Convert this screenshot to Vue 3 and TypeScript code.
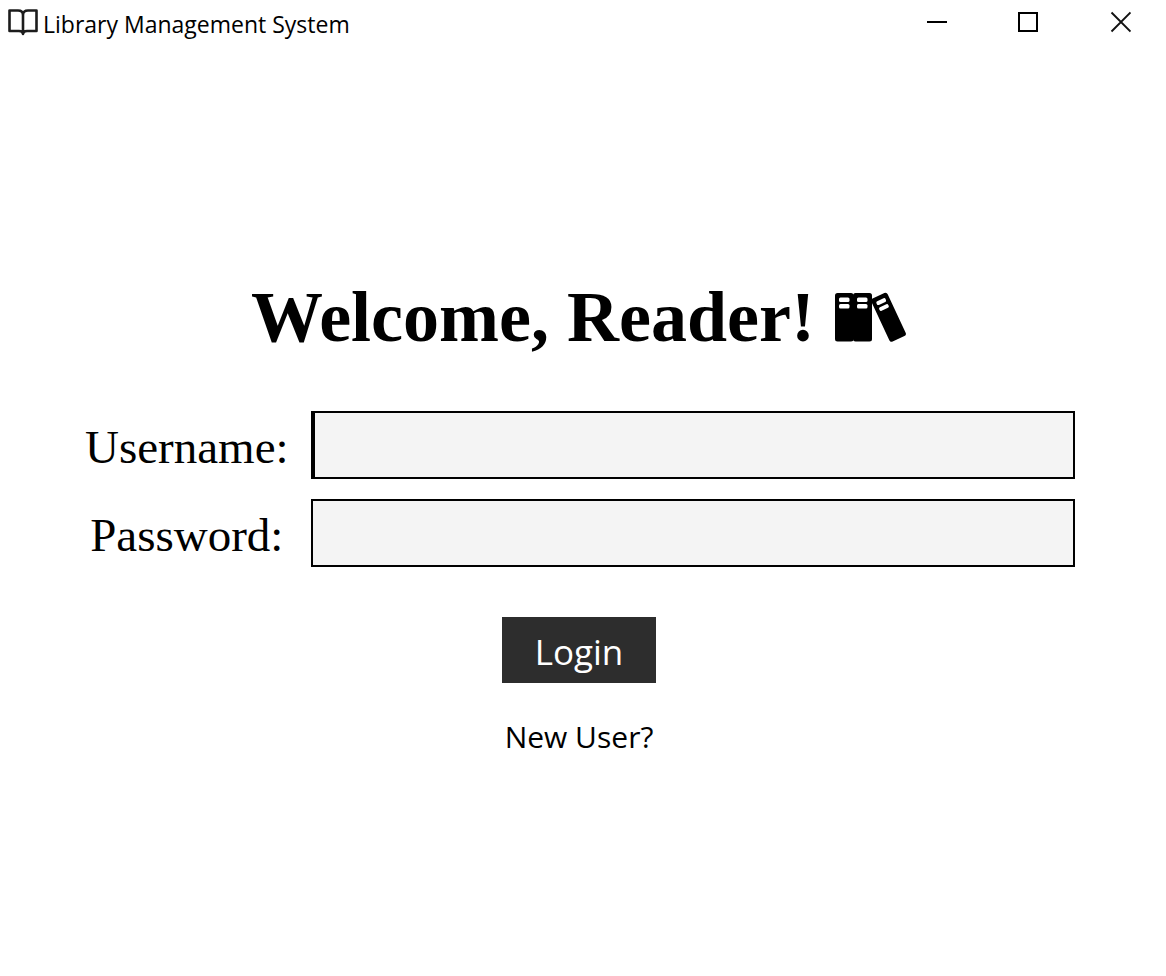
<script setup lang="ts">
import { onMounted, ref } from 'vue'

const username = ref('')
const password = ref('')
const usernameField = ref<HTMLInputElement | null>(null)

onMounted(() => usernameField.value?.focus())
</script>

<template>
  <div class="window">
    <header class="titlebar">
      <svg class="app-icon" viewBox="0 0 32 28" aria-hidden="true">
        <path
          d="M2.500 2.500H11Q16 2.500 16 7Q16 2.500 21 2.500H29.500V23H20Q16 23 16 26Q16 23 12 23H2.500ZM16 6V26"
          fill="none"
          stroke="#1c1c1c"
          stroke-width="2.6"
          stroke-linejoin="round"
        />
      </svg>
      <span class="app-title">Library Management System</span>
      <div class="controls">
        <button type="button" aria-label="Minimize">
          <svg viewBox="0 0 22 22"><path d="M2 11H22" stroke="#000" stroke-width="2" /></svg>
        </button>
        <button type="button" aria-label="Maximize">
          <svg viewBox="0 0 22 22"><rect x="2" y="2" width="18" height="18" fill="none" stroke="#000" stroke-width="2" /></svg>
        </button>
        <button type="button" aria-label="Close">
          <svg viewBox="0 0 22 22"><path d="M2.500 1.500L21.500 20.500M21.500 1.500L2.500 20.500" stroke="#111" stroke-width="1.9" /></svg>
        </button>
      </div>
    </header>

    <main class="content">
      <h1>
        <span>Welcome, Reader!</span>
        <svg class="books" viewBox="0 0 72 50" aria-hidden="true">
          <rect x="0" y="1" width="18.500" height="48.500" rx="2.500" />
          <rect x="18" y="1" width="19" height="48.500" rx="2.500" />
          <rect x="44.500" y="1.500" width="18" height="47.500" rx="2.500" transform="rotate(-25 53.500 25.250)" />
          <g fill="#fff">
            <rect x="4" y="5.500" width="10.500" height="4.500" rx="1.500" />
            <rect x="4" y="12" width="10.500" height="4.500" rx="1.500" />
            <rect x="22" y="5.500" width="10.500" height="4.500" rx="1.500" />
            <rect x="22" y="12" width="10.500" height="4.500" rx="1.500" />
            <g transform="rotate(-25 53.500 25.250)">
              <rect x="48.500" y="6" width="10" height="4" rx="1.500" />
              <rect x="48.500" y="12.500" width="10" height="4" rx="1.500" />
            </g>
          </g>
        </svg>
      </h1>

      <form @submit.prevent>
        <div class="fields">
          <label for="username">Username:</label>
          <input id="username" ref="usernameField" v-model="username" class="first" type="text" autocomplete="off" />
          <label for="password">Password:</label>
          <input id="password" v-model="password" type="password" autocomplete="off" />
        </div>
        <button class="login" type="submit">Login</button>
      </form>
      <a class="new-user" href="#">New User?</a>
    </main>
  </div>
</template>

<style>
body {
  margin: 0;
  background: #fff;
}
</style>

<style scoped>
.window {
  min-height: 100vh;
  box-sizing: border-box;
  display: flex;
  flex-direction: column;
  color: #000;
  font-family: "Segoe UI", "Open Sans", "Noto Sans", sans-serif;
}

.titlebar {
  height: 44px;
  display: flex;
  align-items: center;
  padding-left: 7px;
}

.app-icon {
  width: 32px;
  height: 28px;
}

.app-title {
  margin-left: 4px;
  padding-top: 4px;
  font-size: 23px;
  line-height: 32px;
}

.controls {
  display: flex;
  margin-left: auto;
}

.controls button {
  width: 92px;
  height: 44px;
  display: flex;
  align-items: center;
  justify-content: center;
  padding: 0;
  border: 0;
  background: transparent;
}

.controls svg {
  width: 22px;
  height: 22px;
}

.content {
  flex: 1;
  display: flex;
  flex-direction: column;
  align-items: center;
  justify-content: center;
  padding: 16px 91px 0 83px;
}

h1 {
  display: flex;
  align-items: center;
  gap: 20px;
  margin: 0 0 54px;
  font-family: "Liberation Serif", "Times New Roman", serif;
  font-size: 72px;
  font-weight: 700;
  line-height: 80px;
}

.books {
  width: 72px;
  height: 50px;
}

form {
  width: 100%;
  display: flex;
  flex-direction: column;
  align-items: center;
}

.fields {
  width: 100%;
  display: grid;
  grid-template-columns: auto 1fr;
  gap: 20px;
  align-items: center;
}

.fields label {
  padding: 4px 2px 0;
  text-align: center;
  font-family: "Liberation Serif", "Times New Roman", serif;
  font-size: 47px;
  line-height: 56px;
}

.fields input {
  width: 100%;
  height: 68px;
  box-sizing: border-box;
  padding: 0 8px;
  border: 2px solid #000;
  border-radius: 0;
  outline: 0;
  background: #f4f4f4;
  font-family: "Liberation Serif", "Times New Roman", serif;
  font-size: 47px;
  caret-color: transparent;
}

.fields .first:focus {
  border-left-width: 4px;
}

.login {
  height: 66px;
  margin-top: 50px;
  padding: 2px 33px 0;
  border: 0;
  background: #2d2d2d;
  color: #fff;
  font-family: inherit;
  font-size: 35px;
}

.new-user {
  margin-top: 32px;
  color: #000;
  font-size: 30px;
  line-height: 44px;
  text-decoration: none;
}
</style>
